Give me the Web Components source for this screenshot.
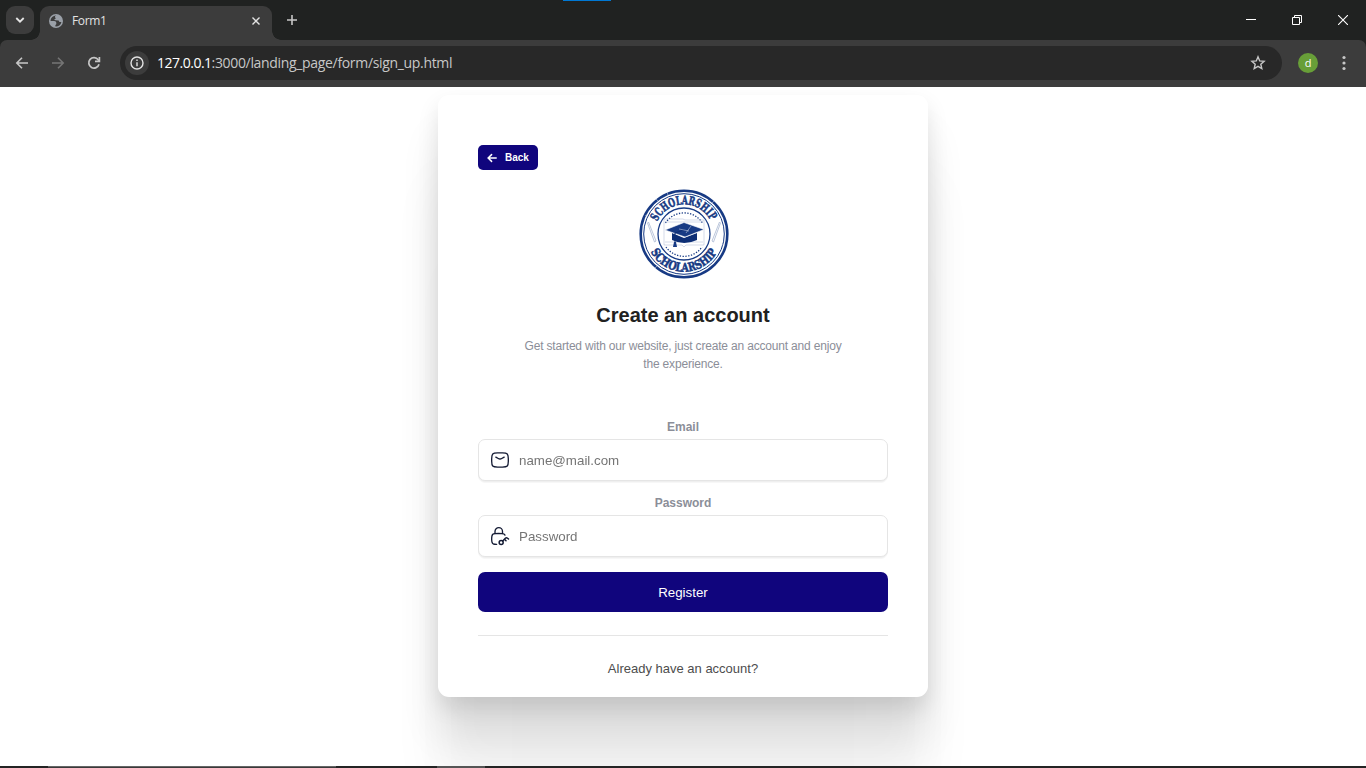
<!DOCTYPE html>
<html lang="en"><head><meta charset="utf-8"><title>Form1</title>
<style>html,body{margin:0;height:768px;overflow:hidden;background:#fff}body{font-family:"Liberation Sans",Arial,sans-serif}</style></head><body>
<browser-window>
<sign-up-card>
<form-field label="Email" placeholder="name@mail.com"><svg slot="icon" width="20" height="20" viewBox="0 0 24 24" fill="none" stroke="#141B34" stroke-width="1.6" stroke-linecap="round" stroke-linejoin="round"><path d="M7 8.5L9.942 10.239C11.657 11.254 12.343 11.254 14.058 10.239L17 8.5"/><path d="M2.016 13.476C2.081 16.541 2.114 18.074 3.245 19.209C4.376 20.345 5.95 20.384 9.099 20.463C11.039 20.512 12.961 20.512 14.901 20.463C18.05 20.384 19.624 20.345 20.755 19.209C21.886 18.074 21.919 16.541 21.984 13.476C22.005 12.49 22.005 11.51 21.984 10.524C21.919 7.459 21.886 5.926 20.755 4.791C19.624 3.655 18.05 3.616 14.901 3.537C12.961 3.488 11.039 3.488 9.099 3.537C5.95 3.616 4.376 3.655 3.245 4.791C2.114 5.926 2.081 7.459 2.016 10.524C1.995 11.51 1.995 12.49 2.016 13.476Z"/></svg></form-field>
<form-field label="Password" placeholder="Password"><svg slot="icon" width="20" height="20" viewBox="0 0 24 24" fill="none" stroke="#141B34" stroke-width="1.6" stroke-linecap="round" stroke-linejoin="round"><path d="M18 11.004C17.417 9.917 16.273 9.158 14.952 9.099C13.477 9.034 11.979 9 10.329 9C8.679 9 7.181 9.034 5.706 9.099C3.953 9.177 2.513 10.488 2.279 12.162C2.126 13.254 2 14.373 2 15.513C2 16.653 2.126 17.773 2.279 18.865C2.513 20.539 3.953 21.85 5.706 21.928C6.42 21.959 7.26 21.983 8 22"/><path d="M6 9V6.5C6 4.015 8.015 2 10.5 2C12.985 2 15 4.015 15 6.5V9"/><g stroke-width="1.8"><circle cx="13.4" cy="19.7" r="2.4"/><path d="M15.2 17.9L18.7 14.5C19.6 13.7 20.6 13.9 22.2 15.6M17.4 15.8L19.2 17.6"/></g></svg></form-field>
</sign-up-card>
</browser-window>
<script>
const define=(name,html,fn)=>customElements.define(name,class extends HTMLElement{
  connectedCallback(){if(this.shadowRoot)return;this.attachShadow({mode:'open'}).innerHTML=typeof html==='function'?html(this):html;}
});

define('window-tabs',`<style>
:host{display:flex;height:40px;background:#202221;color:#e3e3e3;position:relative;box-sizing:border-box}
.search{width:28px;height:28px;margin:6px 0 0 6px;border-radius:9px;background:#3c3c3c;display:grid;place-items:center}
.tab{width:232px;height:34px;margin:6px 0 0 6px;background:#3c3c3c;border-radius:9px 9px 0 0;display:flex;align-items:center;box-sizing:border-box;padding:0 9px 5px;position:relative;font:12px "Open Sans",sans-serif}
.tab:before,.tab:after{content:"";position:absolute;bottom:0;width:9px;height:9px}
.tab:before{left:-9px;background:radial-gradient(circle at 0 0,#202221 8.5px,#3c3c3c 9px)}
.tab:after{right:-9px;background:radial-gradient(circle at 100% 0,#202221 8.5px,#3c3c3c 9px)}
.name{margin-left:9px;flex:1;letter-spacing:-.35px}
.plus{margin:14px 0 0 14px}.controls{margin-left:auto;display:flex}
.controls span{width:46px;display:grid;place-items:center}
.mark{position:absolute;left:563px;top:0;width:48px;height:1px;background:#0078d4}
</style><div class="search"><svg width="10" height="8" viewBox="0 0 10 8" fill="none" stroke="#e5e5e5" stroke-width="1.8"><path d="M1.3 2L5 5.7L8.7 2"/></svg></div>
<div class="tab"><svg width="14" height="14" viewBox="0 0 14 14"><circle cx="7" cy="7" r="7" fill="#9aa0a8"/><path d="M7.4 1.4C5.8 1.8 5.6 3 6.4 3.7C7 4.3 6.4 5 5.6 5.1C5 5.3 5.7 6.2 6.6 6.2L9.4 6.4C10.2 6.6 10.1 8 11 8L12.4 7.9A5.5 5.5 0 0 1 6.4 12.5V11C7.6 10.6 7.3 9.4 7.3 9.1C7.3 7.8 6.5 7 5.2 7H1.5A5.5 5.5 0 0 1 7.4 1.4Z" fill="#3c3c3c"/></svg><span class="name">Form1</span><svg width="8" height="8" viewBox="0 0 8 8" stroke="#e3e3e3" stroke-width="1.4" style="margin-right:3px"><path d="M.5 .5L7.5 7.5M7.5 .5L.5 7.5"/></svg></div>
<svg class="plus" width="12" height="12" viewBox="0 0 12 12" stroke="#c7c7c7" stroke-width="1.6"><path d="M6 1V11M1 6H11"/></svg>
<div class="controls"><span><svg width="10" height="10"><path fill="#fff" d="M0 4h10v1H0z"/></svg></span><span><svg width="10" height="10" fill="none" stroke="#fff"><path d="M.5 2.5h7v7h-7zM2.5 2.5v-2h7v7h-2"/></svg></span><span><svg width="10" height="10" stroke="#fff" stroke-width="1.1"><path d="M0 0L10 10M10 0L0 10"/></svg></span></div><i class="mark"></i>`);

define('address-bar',`<style>
:host{display:flex;align-items:center;height:47px;background:#3c3c3c;border-radius:7px 7px 0 0;box-sizing:border-box;padding:0 14px 1px}
.nav{display:flex;gap:20px;width:106px}.bar{width:1162px;height:34px;border-radius:17px;background:#282828;display:flex;align-items:center;box-sizing:border-box;padding:0 16px 0 5px;color:#c7c7c7}
.info{width:24px;height:24px;border-radius:50%;background:#3c3c3c;display:grid;place-items:center;margin-right:8px}
.url{flex:1;font:14px/18px "Open Sans",sans-serif;letter-spacing:-.33px}.url b{font-weight:400;color:#fff;letter-spacing:-.5px}
.avatar{width:20px;height:20px;border-radius:50%;background:#689f38;color:#fff;text-align:center;font:11px/20px "Open Sans",sans-serif;margin-left:16px}
.menu{margin-left:24px}
</style><div class="nav"><svg width="16" height="16" fill="none" stroke="#c7c7c7" stroke-width="1.6"><path d="M14 8H3M8 2.8L2.8 8L8 13.2"/></svg><svg width="16" height="16" fill="none" stroke="#757575" stroke-width="1.6"><path d="M2 8H13M8 2.8L13.2 8L8 13.2"/></svg><svg width="16" height="16" viewBox="0 0 16 16" fill="none" stroke="#c7c7c7" stroke-width="1.7"><path d="M13 9.2A5.2 5.2 0 1 1 12.2 4.8L13 5.8"/><path d="M13.4 2V6.3H9"/></svg></div>
<div class="bar"><span class="info"><svg width="14" height="14" viewBox="0 0 14 14" fill="none" stroke="#e3e3e3" stroke-width="1.4"><circle cx="7" cy="7" r="6"/><path d="M7 6.2V10.3M7 3.6V5"/></svg></span><span class="url"><b>127.0.0.1</b>:3000/landing_page/form/sign_up.html</span><svg width="16" height="16" viewBox="0 0 16 16" fill="none" stroke="#c7c7c7" stroke-width="1.4"><path d="M8 1.8L9.7 5.9L14.1 6.3L10.8 9.2L11.8 13.6L8 11.3L4.2 13.6L5.2 9.2L1.9 6.3L6.3 5.9Z"/></svg></div><span class="avatar">d</span><svg class="menu" width="4" height="16" fill="#c7c7c7"><circle cx="2" cy="2.5" r="1.6"/><circle cx="2" cy="8" r="1.6"/><circle cx="2" cy="13.5" r="1.6"/></svg>`);

define('scholar-seal',`<style>:host{display:block;width:90px;height:90px;flex:none}svg{display:block}text{font:bold 12px "DejaVu Serif",serif;fill:#173a84;stroke:#173a84;stroke-width:.55}</style>
<svg width="90" height="90" viewBox="0 0 90 90"><defs><path id="top" d="M18.2 32.6A29.5 29.5 0 0 1 71.8 32.6"/><path id="bottom" d="M11.6 62.8A38 38 0 0 0 78.4 62.8"/></defs>
<g fill="none" stroke="#173a84"><circle cx="45" cy="45" r="43.3" stroke-width="2.6"/><circle cx="45" cy="45" r="40.3" stroke-width="1"/><circle cx="45" cy="45" r="26" stroke-width="1.3"/><path d="M26.5 34A22 22 0 0 1 63.5 34M27 58A22 22 0 0 0 63 58" stroke-width="1.3" stroke-dasharray="1.3 1.5"/></g>
<g fill="none" stroke="#aab7d2" stroke-width=".8"><path d="M8.5 34L15.5 53L17 52L9.5 33ZM81.5 34L74.5 53L73 52L80.5 33Z"/><path d="M25 30H44L46 31H65V56H47L45 58L43 56H25ZM26 33H64M26 53H64" stroke-width=".5"/></g>
<text><textPath href="#top" textLength="66" lengthAdjust="spacingAndGlyphs">SCHOLARSHIP</textPath></text>
<text><textPath href="#bottom" textLength="81" lengthAdjust="spacingAndGlyphs">SCHOLARSHIP</textPath></text>
<path d="M33 44V51Q45 57 58 51V44L45 49Z" fill="#0d2e75"/><path d="M26 41L45 33.5L65 40.5L46 48Z" fill="#173a84" stroke="#fff" stroke-width=".6"/><path d="M45 41L36 44V54" stroke="#0d2e75" stroke-width="1" fill="none"/><path d="M35 53L34 58H38L37 53Z" fill="#173a84"/>
<path d="M6 27L9 25M17 10L19 12M28 3L29 6M75 12L73 14M84 56L81 55M16 79L19 76M40 40L50 42M52 37L47 44" stroke="#fff" stroke-opacity=".6" stroke-width=".7"/></svg>`);

define('form-field',el=>`<style>:host{display:flex;flex-direction:column;gap:5px;width:410px}
label{font:bold 12px/14px "Liberation Sans",Arial,sans-serif;color:#8b8e98;text-align:center;padding-top:1px}
.box{height:42px;border:1px solid #e5e5e5;border-radius:7px;box-sizing:border-box;display:flex;align-items:center;padding-left:11px;gap:9px;filter:drop-shadow(0 1px 0 #efefef) drop-shadow(0 1px .5px rgba(239,239,239,.5));background:#fff}
input{border:0;outline:0;padding:0;flex:1;font:13.333px "Liberation Sans",Arial,sans-serif;background:none}input::placeholder{color:#757575}::slotted(svg){display:block}</style>
<label>${el.getAttribute('label')}</label><div class="box"><slot name="icon"></slot><input placeholder="${el.getAttribute('placeholder')}"></div>`);

define('sign-up-card',`<style>
:host{display:flex;flex-direction:column;align-items:center;width:490px;height:602px;box-sizing:border-box;padding:50px 40px 19px;margin:8px auto 0;background:#fff;border-radius:11px;box-shadow:0 155px 62px rgba(0,0,0,.01),0 87px 52px rgba(0,0,0,.05),0 39px 39px rgba(0,0,0,.09),0 10px 21px rgba(0,0,0,.1);font-family:"Liberation Sans",Arial,sans-serif}
.back{align-self:flex-start;flex:none;width:60px;height:25px;border:0;border-radius:5px;background:#10057d;color:#fff;font:bold 10px "Liberation Sans",Arial,sans-serif;display:flex;align-items:center;padding:0 0 0 9px;gap:8px}
scholar-seal{margin:19px 0 0 1px}
h1{font-size:20px;line-height:23px;margin:25px 0 0;color:#212121;flex:none}
p{width:340px;text-align:center;font-size:12px;line-height:18px;letter-spacing:-.18px;color:#8b8e98;margin:10px 0 46px;flex:none}
.fields{display:flex;flex-direction:column;gap:14px;flex:none}
.register{width:410px;height:40px;border:0;border-radius:7px;background:#10057d;color:#fff;font:13.333px "Liberation Sans",Arial,sans-serif;margin-top:15px;flex:none}
hr{width:410px;height:1px;border:0;background:#e5e5e5;margin:23px 0 24px;flex:none}
.note{font-size:13px;line-height:18px;color:#4d4d4d;flex:none}
</style><button class="back"><svg width="10" height="10" viewBox="0 0 10 10" fill="none" stroke="#fff" stroke-width="1.5" stroke-linecap="round" stroke-linejoin="round"><path d="M9.2 5H1M4.6 1.6L1.1 5L4.6 8.4"/></svg>Back</button><scholar-seal></scholar-seal><h1>Create an account</h1><p>Get started with our website, just create an account and enjoy<br>the experience.</p><div class="fields"><slot></slot></div><button class="register">Register</button><hr><div class="note">Already have an account?</div>`);

define('browser-window',`<style>:host{display:flex;flex-direction:column;width:1366px;height:768px;overflow:hidden;background:#202221}
main{height:679px;overflow:hidden;background:#fff;display:flow-root}
footer{height:2px;background:linear-gradient(#666 50%,#3a3a3a 50%) 48px 0/288px 2px no-repeat,linear-gradient(#555,#555) 437px 0/48px 2px no-repeat,#242424}</style>
<window-tabs></window-tabs><address-bar></address-bar><main><slot></slot></main><footer></footer>`);
</script></body></html>
